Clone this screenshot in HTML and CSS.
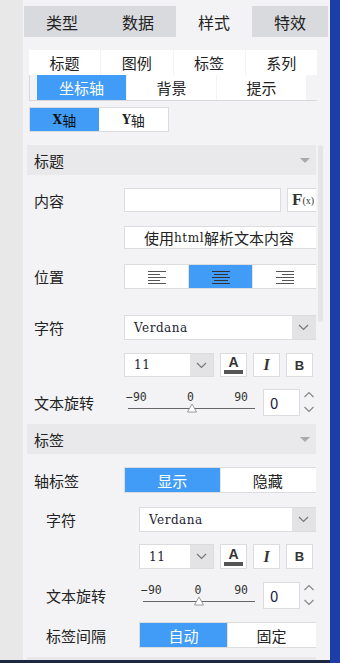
FILE: index.html
```html
<!DOCTYPE html>
<html lang="zh">
<head>
  <meta charset="UTF-8" />
  <title>样式</title>
  <link rel="stylesheet" href="styles.css">
</head>
<body>
  <div class="app">
    <div class="side"></div>

    <div class="panel">
      <div class="tabs">
        <span class="tab">类型</span>
        <span class="tab">数据</span>
        <span class="tab current">样式</span>
        <span class="tab">特效</span>
      </div>

      <div class="subtabs">
        <div class="row-a">
          <span>标题</span><span>图例</span><span>标签</span><span>系列</span>
        </div>
        <div class="row-b">
          <span class="on">坐标轴</span><span>背景</span><span>提示</span>
        </div>
      </div>

      <div class="axis">
        <span class="on"><b class="latin">X</b>轴</span>
        <span><b class="latin">Y</b>轴</span>
      </div>

      <div class="body">
        <div class="scroll">
          <div class="content">

            <div class="sec-head"><span>标题</span><i class="caret"></i></div>

            <div class="row">
              <label>内容</label>
              <div class="ctl">
                <div class="input wide"></div>
                <div class="fx">F<small>(x)</small></div>
              </div>
            </div>

            <div class="row mt14 h23">
              <label></label>
              <div class="btn">使用<span class="latin">html</span>解析文本内容</div>
            </div>

            <div class="row mt15">
              <label>位置</label>
              <div class="seg">
                <span>
                  <svg width="18" height="14" viewBox="0 0 18 14"><g stroke="#555" stroke-width="1.2"><path d="M0 1.5h18M0 4.5h12M0 7.5h18M0 10.5h12M0 13.5h18"/></g></svg>
                </span>
                <span class="on">
                  <svg width="18" height="14" viewBox="0 0 18 14"><g stroke="#333" stroke-width="1.2"><path d="M0 1.5h18M2 4.5h14M0 7.5h18M2 10.5h14M0 13.5h18"/></g></svg>
                </span>
                <span>
                  <svg width="18" height="14" viewBox="0 0 18 14"><g stroke="#555" stroke-width="1.2"><path d="M0 1.5h18M6 4.5h12M0 7.5h18M6 10.5h12M0 13.5h18"/></g></svg>
                </span>
              </div>
            </div>

            <div class="row mt26">
              <label>字符</label>
              <div class="select">
                <span class="val latin">Verdana</span>
                <span class="arr"><svg width="11" height="7" viewBox="0 0 11 7"><path d="M1 1l4.5 4.5L10 1" fill="none" stroke="#777" stroke-width="1.2"/></svg></span>
              </div>
            </div>

            <div class="row">
              <label></label>
              <div class="ctl">
                <div class="select small">
                  <span class="val latin">11</span>
                  <span class="arr"><svg width="11" height="7" viewBox="0 0 11 7"><path d="M1 1l4.5 4.5L10 1" fill="none" stroke="#777" stroke-width="1.2"/></svg></span>
                </div>
                <div class="ibtn color"><b>A</b><i class="bar"></i></div>
                <div class="ibtn ital">I</div>
                <div class="ibtn bold">B</div>
              </div>
            </div>

            <div class="row mt12 h27">
              <label>文本旋转</label>
              <div class="ctl rot">
                <div class="slider">
                  <div class="ticks"><span>−90</span><span>0</span><span>90</span></div>
                  <div class="track"><svg class="thumb" width="11" height="10" viewBox="0 0 11 10"><path d="M5.5 1L10 9H1z" fill="#fff" stroke="#999"/></svg></div>
                </div>
                <div class="num">0</div>
                <div class="spin">
                  <svg width="12" height="27" viewBox="0 0 12 27"><g fill="none" stroke="#888" stroke-width="1.2"><path d="M1.5 8l4.5-4.5L10.5 8M1.5 18l4.5 4.5L10.5 18"/></g></svg>
                </div>
              </div>
            </div>

            <div class="sec-head mt8"><span>标签</span><i class="caret"></i></div>

            <div class="row h26">
              <label>轴标签</label>
              <div class="seg two">
                <span class="on">显示</span><span>隐藏</span>
              </div>
            </div>

            <div class="row sub mt14">
              <label>字符</label>
              <div class="select">
                <span class="val latin">Verdana</span>
                <span class="arr"><svg width="11" height="7" viewBox="0 0 11 7"><path d="M1 1l4.5 4.5L10 1" fill="none" stroke="#777" stroke-width="1.2"/></svg></span>
              </div>
            </div>

            <div class="row sub mt12">
              <label></label>
              <div class="ctl">
                <div class="select small2">
                  <span class="val latin">11</span>
                  <span class="arr"><svg width="11" height="7" viewBox="0 0 11 7"><path d="M1 1l4.5 4.5L10 1" fill="none" stroke="#777" stroke-width="1.2"/></svg></span>
                </div>
                <div class="ibtn color"><b>A</b><i class="bar"></i></div>
                <div class="ibtn ital">I</div>
                <div class="ibtn bold">B</div>
              </div>
            </div>

            <div class="row sub h27">
              <label>文本旋转</label>
              <div class="ctl rot">
                <div class="slider">
                  <div class="ticks"><span>−90</span><span>0</span><span>90</span></div>
                  <div class="track"><svg class="thumb" width="11" height="10" viewBox="0 0 11 10"><path d="M5.5 1L10 9H1z" fill="#fff" stroke="#999"/></svg></div>
                </div>
                <div class="num">0</div>
                <div class="spin">
                  <svg width="12" height="27" viewBox="0 0 12 27"><g fill="none" stroke="#888" stroke-width="1.2"><path d="M1.5 8l4.5-4.5L10.5 8M1.5 18l4.5 4.5L10.5 18"/></g></svg>
                </div>
              </div>
            </div>

            <div class="row sub h26">
              <label>标签间隔</label>
              <div class="seg two">
                <span class="on">自动</span><span>固定</span>
              </div>
            </div>

            <div class="sec-head mt9"></div>

          </div>
        </div>
        <div class="bar-track"><div class="thumb-bar"></div></div>
      </div>
    </div>

    <div class="edge"></div>
  </div>
</body>
</html>
```

FILE: styles.css
```css
body {
  margin: 0;
  background: #e8e8e8;
  font-family: "Noto Sans CJK SC", "Noto Sans", sans-serif;
  color: #222;
}
.latin {
  font-family: "DejaVu Serif", "Noto Sans CJK SC", serif;
}
.app {
  display: flex;
  width: 340px;
  height: 663px;
  overflow: hidden;
}
.side {
  width: 23px;
  background: #e8e8e8;
  border-bottom: 3px solid #1c2740;
  box-sizing: border-box;
}
.panel {
  width: 307px;
  background: #f3f3f5;
  border-bottom: 3px solid #1c2740;
  box-sizing: border-box;
  overflow: hidden;
}
.edge {
  width: 10px;
  background: #1b3ea9;
}

/* top tabs */
.tabs {
  display: flex;
  margin: 6px 0 0 1px;
  width: 304px;
  height: 31px;
}
.tab {
  flex: 1;
  display: flex;
  align-items: center;
  justify-content: center;
  background: #d9dadd;
  font-size: 16px;
}
.tab.current {
  background: #f3f3f5;
}

/* sub tabs */
.subtabs {
  margin: 13px 0 0 6px;
  width: 288px;
}
.row-a {
  display: flex;
  gap: 1px;
  height: 25px;
}
.row-a span {
  flex: 1;
  background: #fff;
  display: flex;
  align-items: center;
  justify-content: center;
  font-size: 15px;
}
.row-b {
  display: flex;
  gap: 1px;
  height: 25px;
  padding-left: 7px;
  border-left: 1px solid #d8d8da;
  border-bottom: 1px solid #d8d8da;
}
.row-b span {
  width: 89px;
  background: #fff;
  display: flex;
  align-items: center;
  justify-content: center;
  font-size: 15px;
}
.row-b span.on,
.seg span.on,
.axis span.on {
  background: #409cf7;
  color: #fff;
}
.axis {
  display: flex;
  width: max-content;
  margin: 6px 0 0 6px;
  border: 1px solid #dcdcde;
  height: 23px;
}
.axis span {
  width: 69px;
  background: #fff;
  display: flex;
  align-items: center;
  justify-content: center;
  font-size: 14px;
}
.axis span.on {
  color: #111;
}
.axis b {
  font-size: 12px;
}

/* scroll body */
.body {
  display: flex;
  margin: 13px 0 0 4px;
}
.scroll {
  width: 289px;
  overflow: hidden;
}
.content {
  width: 293px;
}
.bar-track {
  width: 5px;
  margin-left: 2px;
}
.thumb-bar {
  height: 177px;
  background: #e5e5e7;
  border-radius: 3px;
}

.sec-head {
  height: 30px;
  background: #e9e9eb;
  display: flex;
  align-items: center;
  justify-content: space-between;
  padding: 0 10px 0 7px;
  font-size: 15px;
}
.caret {
  width: 0;
  height: 0;
  border-left: 5px solid transparent;
  border-right: 5px solid transparent;
  border-top: 5px solid #aaa;
}

.row {
  display: grid;
  grid-template-columns: 97px 196px;
  height: 24px;
  margin-top: 13px;
}
.row.sub {
  grid-template-columns: 112px 181px;
}
.row label {
  display: flex;
  align-items: center;
  padding-left: 7px;
  font-size: 15px;
}
.row.sub label {
  padding-left: 19px;
}
.mt8 { margin-top: 8px; }
.mt9 { margin-top: 9px; }
.mt12 { margin-top: 12px; }
.mt14 { margin-top: 14px; }
.mt15 { margin-top: 15px; }
.mt26 { margin-top: 26px; }
.h23 { height: 23px; }
.row.h26 { height: 26px; }
.row.h27 { height: 27px; }
.row.mt26, .row.sub.mt14, .row.mt15 { height: 25px; }
.row.mt12:not(.h27) { height: 25px; }

.ctl {
  display: flex;
  gap: 6px;
}
.input {
  background: #fff;
  border: 1px solid #dcdcde;
  box-sizing: border-box;
}
.input.wide {
  width: 157px;
}
.fx {
  flex: 1;
  background: #fff;
  border: 1px solid #dcdcde;
  box-sizing: border-box;
  font-family: "Liberation Serif", serif;
  font-weight: bold;
  font-size: 17px;
  color: #333;
  display: flex;
  align-items: center;
  padding-left: 4px;
}
.fx small {
  font-size: 10px;
  font-weight: normal;
}
.btn {
  background: #fff;
  border: 1px solid #dcdcde;
  box-sizing: border-box;
  display: flex;
  align-items: center;
  justify-content: center;
  padding-right: 6px;
  font-size: 15px;
}
.btn .latin {
  font-size: 12px;
  letter-spacing: 0.6px;
}

.seg {
  display: flex;
  gap: 1px;
  background: #e4e4e6;
  border: 1px solid #dcdcde;
  box-sizing: border-box;
}
.seg span {
  width: 63px;
  background: #fff;
  display: flex;
  align-items: center;
  justify-content: center;
  font-size: 15px;
}
.seg.two span {
  flex: 1;
}
.seg.two span:last-child {
  padding-right: 4px;
}

.select {
  display: flex;
  background: #fff;
  border: 1px solid #dcdcde;
  box-sizing: border-box;
}
.select .val {
  flex: 1;
  display: flex;
  align-items: center;
  padding-left: 9px;
  font-size: 12px;
  letter-spacing: 0.5px;
  color: #223;
}
.select .arr {
  width: 27px;
  background: #e3e3e5;
  display: flex;
  align-items: center;
  padding-left: 6px;
  box-sizing: border-box;
}
.select.small {
  width: 90px;
}
.select.small2 {
  width: 75px;
}
.select.small .arr,
.select.small2 .arr {
  width: 23px;
}

.ibtn {
  width: 27px;
  background: #fff;
  border: 1px solid #dcdcde;
  box-sizing: border-box;
  display: flex;
  flex-direction: column;
  align-items: center;
  justify-content: center;
  color: #333;
}
.ibtn.color b {
  font-family: "Liberation Sans", sans-serif;
  font-size: 14px;
  line-height: 12px;
}
.ibtn .bar {
  width: 19px;
  height: 4px;
  background: #555;
  margin-top: 2px;
}
.ibtn.ital {
  font-family: "Liberation Serif", serif;
  font-style: italic;
  font-weight: bold;
  font-size: 16px;
}
.ibtn.bold {
  font-family: "Liberation Sans", sans-serif;
  font-weight: bold;
  font-size: 13px;
}

.rot {
  gap: 0;
  padding-right: 4px;
}
.slider {
  flex: 1;
  display: flex;
  flex-direction: column;
}
.ticks {
  display: flex;
  justify-content: space-between;
  padding: 0 7px 0 2px;
  font-family: "DejaVu Sans Mono", monospace;
  font-size: 11.5px;
  line-height: 14px;
  color: #333;
  margin-top: 1px;
}
.track {
  position: relative;
  height: 1px;
  background: #666;
  margin: 4px 0 0 4px;
}
.thumb {
  position: absolute;
  left: 50%;
  top: -5px;
  transform: translateX(-50%);
}
.num {
  width: 37px;
  margin-left: 8px;
  background: #fff;
  border: 1px solid #dcdcde;
  box-sizing: border-box;
  display: flex;
  align-items: center;
  padding-left: 6px;
  font-size: 15px;
  color: #1a1a44;
}
.spin {
  width: 14px;
  margin-left: 2px;
  display: flex;
  justify-content: center;
}
```
